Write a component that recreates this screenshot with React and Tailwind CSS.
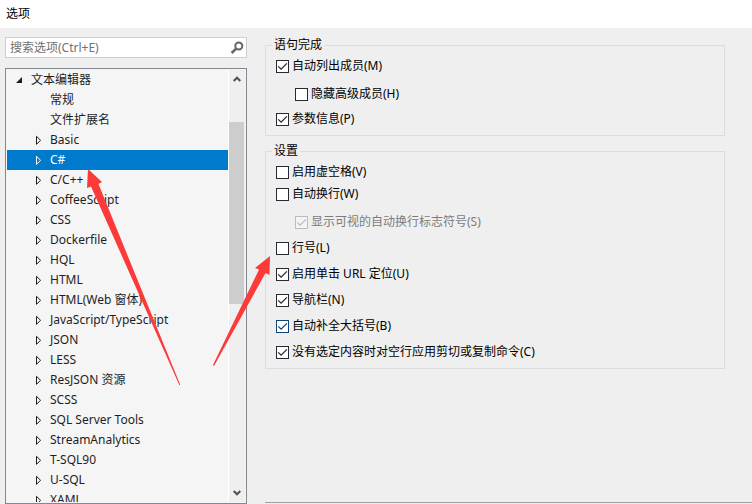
import React, { useState } from "react";

const treeItems = [
  { label: "常规", leaf: true },
  { label: "文件扩展名", leaf: true },
  { label: "Basic" },
  { label: "C#" },
  { label: "C/C++" },
  { label: "CoffeeScript" },
  { label: "CSS" },
  { label: "Dockerfile" },
  { label: "HQL" },
  { label: "HTML" },
  { label: "HTML(Web 窗体)" },
  { label: "JavaScript/TypeScript" },
  { label: "JSON" },
  { label: "LESS" },
  { label: "ResJSON 资源" },
  { label: "SCSS" },
  { label: "SQL Server Tools" },
  { label: "StreamAnalytics" },
  { label: "T-SQL90" },
  { label: "U-SQL" },
  { label: "XAML" },
];

// Options are listed in clusters, rows inside a cluster sit close together
const completionOptions = [
  [
    { id: "members", label: "自动列出成员(M)", checked: true },
    { id: "advanced", label: "隐藏高级成员(H)", sub: true },
  ],
  [{ id: "params", label: "参数信息(P)", checked: true }],
];

const settingOptions = [
  [
    { id: "virtual-space", label: "启用虚空格(V)" },
    { id: "word-wrap", label: "自动换行(W)" },
    { id: "wrap-glyphs", label: "显示可视的自动换行标志符号(S)", sub: true, checked: true, disabled: true },
  ],
  [{ id: "line-numbers", label: "行号(L)" }],
  [{ id: "url-nav", label: "启用单击 URL 定位(U)", checked: true }],
  [{ id: "nav-bar", label: "导航栏(N)", checked: true }],
  [{ id: "braces", label: "自动补全大括号(B)", checked: true, focused: true }],
  [{ id: "blank-lines", label: "没有选定内容时对空行应用剪切或复制命令(C)", checked: true }],
];

const Option = ({ option }) => {
  const [checked, setChecked] = useState(Boolean(option.checked));

  // Box and tick share one colour
  let tone = "text-[#262a33]";
  if (option.focused) tone = "text-[#0f4475]";
  if (option.disabled) tone = "text-[#bcbcbc]";

  return (
    <div className={`flex h-[22px] items-center gap-[3px] ${option.sub ? "mt-1.5 ml-[19px]" : ""}`}>
      <span className={`grid size-[13px] shrink-0 ${tone}`}>
        <input
          id={option.id}
          type="checkbox"
          checked={checked}
          disabled={option.disabled}
          onChange={(e) => setChecked(e.target.checked)}
          className={`col-start-1 row-start-1 size-[13px] appearance-none border border-current ${
            option.disabled ? "bg-[#f4f4f4]" : "bg-white"
          }`}
        />
        {checked && (
          <svg viewBox="0 0 13 13" className="pointer-events-none col-start-1 row-start-1 size-[13px]" fill="none">
            <path d="M2.2 6.4 L5.1 9.2 L10.9 3.4" stroke="currentColor" strokeWidth="1.3" />
          </svg>
        )}
      </span>
      <label htmlFor={option.id} className={`whitespace-nowrap ${option.disabled ? "text-[#7c7c7c]" : "text-black"}`}>
        {option.label}
      </label>
    </div>
  );
};

const OptionGroup = ({ title, clusters, gap }) => (
  <fieldset className="border border-[#dcdcdc] pb-[5px] pl-2.5">
    <legend className="-ml-1 px-0.5 leading-4 text-black">{title}</legend>
    <div className={`flex flex-col pt-0.5 ${gap}`}>
      {clusters.map((options) => (
        <div key={options[0].id}>
          {options.map((o) => (
            <Option key={o.id} option={o} />
          ))}
        </div>
      ))}
    </div>
  </fieldset>
);

const SearchBox = () => (
  <div className="flex h-[21px] items-center border border-[#ccccdc] bg-white pr-0.5 pl-1">
    <input
      type="text"
      aria-label="搜索选项"
      placeholder="搜索选项(Ctrl+E)"
      className="min-w-0 flex-1 bg-transparent leading-4 outline-none placeholder:text-[#717171]"
    />
    <button type="button" aria-label="搜索" className="shrink-0">
      <svg viewBox="0 0 14 14" className="size-3.5" fill="none" stroke="#656565">
        <circle cx="8.8" cy="5" r="3.5" strokeWidth="2" />
        <path d="M6.2 7.6 L1.6 12" strokeWidth="2.6" />
      </svg>
    </button>
  </div>
);

const Tree = () => {
  const [selected, setSelected] = useState("C#");

  return (
    <div className="flex min-h-0 flex-1 border border-[#828790] bg-[#f5f5f5] p-px">
      <div role="tree" className="min-w-0 flex-1 overflow-hidden text-[#1e1e1e]">
        <div role="treeitem" aria-expanded="true" className="flex h-5 items-center pl-2">
          <svg viewBox="0 0 8 8" className="mr-2 size-2" fill="#1e1e1e">
            <path d="M7 1 V7 H1 Z" />
          </svg>
          文本编辑器
        </div>
        {treeItems.map((item) => {
          const active = item.label === selected;
          return (
            <div
              key={item.label}
              role="treeitem"
              aria-selected={active}
              onClick={() => setSelected(item.label)}
              className={`flex h-5 items-center whitespace-nowrap ${item.leaf ? "pl-[43px]" : "pl-7"} ${
                active ? "bg-[#007acc] text-white" : ""
              }`}
            >
              {!item.leaf && (
                <svg viewBox="0 0 7 10" className="mr-2 h-2.5 w-[7px]" fill="none" stroke="currentColor">
                  <path d="M1.5 1.3 V9.3 L5.6 5.3 Z" />
                </svg>
              )}
              {item.label}
            </div>
          );
        })}
      </div>

      {/* Scrollbar */}
      <div className="flex w-[17px] flex-col border-l border-white bg-[#efefef] pr-px">
        <button type="button" aria-label="向上滚动" className="flex h-[52px] justify-center pt-1.5">
          <svg viewBox="0 0 8 6" className="h-1.5 w-2" fill="none" stroke="#505050" strokeWidth="2">
            <path d="M0.7 5 L4 1.7 L7.3 5" />
          </svg>
        </button>
        <div className="h-[182px] bg-[#cdcdcd]" />
        <button type="button" aria-label="向下滚动" className="flex flex-1 items-end justify-center pb-1.5">
          <svg viewBox="0 0 8 6" className="h-1.5 w-2" fill="none" stroke="#505050" strokeWidth="2">
            <path d="M0.7 1 L4 4.3 L7.3 1" />
          </svg>
        </button>
      </div>
    </div>
  );
};

// Red arrows pointing at the C# node and the line number option
const Arrows = () => (
  <svg
    width="752"
    height="504"
    viewBox="0 0 752 504"
    className="pointer-events-none absolute top-0 left-0"
    fill="#fd3a3a"
  >
    <path d="M88 169 L102 182 L98.5 184 L180.3 385 L179.3 385 L91 186.5 L87 188 Z" />
    <path d="M270 256 L269.5 275 L265.5 273 L214 366 L213 365 L259 269.5 L255 268 Z" />
  </svg>
);

const App = () => (
  <div className="relative flex h-screen flex-col overflow-hidden bg-[#efefef] font-['Noto_Sans','Noto_Sans_CJK_SC',sans-serif] text-xs">
    <header className="flex h-7 shrink-0 items-center bg-white px-1.5 text-black">
      <h1>选项</h1>
    </header>

    <div className="flex min-h-0 flex-1">
      <aside className="ml-[5px] flex w-[242px] shrink-0 flex-col gap-2.5 pt-[9px]">
        <SearchBox />
        <Tree />
      </aside>

      <main className="ml-[18px] flex min-w-0 flex-1 flex-col justify-between pt-[9px] pb-px">
        <div className="mr-[27px] flex flex-col gap-[7px]">
          <OptionGroup title="语句完成" clusters={completionOptions} gap="gap-[3px]" />
          <OptionGroup title="设置" clusters={settingOptions} gap="gap-1" />
        </div>
        <hr className="border-[#a0a0a0]" />
      </main>
    </div>

    <Arrows />
  </div>
);

export default App;
